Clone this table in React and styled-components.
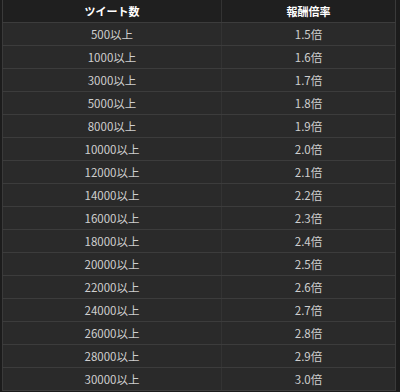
import React from 'react';
import styled, { createGlobalStyle } from 'styled-components';

const rows = [
  ['500以上', '1.5倍'],
  ['1000以上', '1.6倍'],
  ['3000以上', '1.7倍'],
  ['5000以上', '1.8倍'],
  ['8000以上', '1.9倍'],
  ['10000以上', '2.0倍'],
  ['12000以上', '2.1倍'],
  ['14000以上', '2.2倍'],
  ['16000以上', '2.3倍'],
  ['18000以上', '2.4倍'],
  ['20000以上', '2.5倍'],
  ['22000以上', '2.6倍'],
  ['24000以上', '2.7倍'],
  ['26000以上', '2.8倍'],
  ['28000以上', '2.9倍'],
  ['30000以上', '3.0倍'],
];

function App() {
  return (
    <>
      <GlobalStyle />
      <Page>
        <Table>
          <thead>
            <tr>
              <HeadCell>ツイート数</HeadCell>
              <HeadCell>報酬倍率</HeadCell>
            </tr>
          </thead>
          <tbody>
            {rows.map(([count, rate]) => (
              <tr key={count}>
                <Cell>{count}</Cell>
                <Cell>{rate}</Cell>
              </tr>
            ))}
          </tbody>
        </Table>
      </Page>
    </>
  );
}

const GlobalStyle = createGlobalStyle`
  body {
    margin: 0;
    background: #1c1c1c;
    font-family: "Noto Sans CJK JP", "Noto Sans", sans-serif;
  }
`;

const Page = styled.div`
  width: 400px;
  height: 392px;
  padding: 0 4px 0 2px;
  box-sizing: border-box;
  overflow: hidden;
  background: #1c1c1c;
`;

const Table = styled.table`
  width: 100%;
  border-collapse: collapse;
  background: #2a2a2a;
  table-layout: fixed;
  border-left: 1px solid #3a3a3a;
  border-right: 1px solid #3a3a3a;
`;

const HeadCell = styled.th`
  height: 22px;
  padding: 0;
  background: #1f1f1f;
  color: #ffffff;
  font-size: 11px;
  font-weight: bold;
  text-align: center;
  border-bottom: 1px solid #3c3c3c;
  &:first-child {
    width: 218px;
    border-right: 1px solid #333;
  }
`;

const Cell = styled.td`
  height: 22px;
  padding: 0;
  color: #cfcfcf;
  font-size: 11.5px;
  text-align: center;
  border-bottom: 1px solid #3c3c3c;
  &:first-child {
    border-right: 1px solid #333;
  }
`;

export default App;
